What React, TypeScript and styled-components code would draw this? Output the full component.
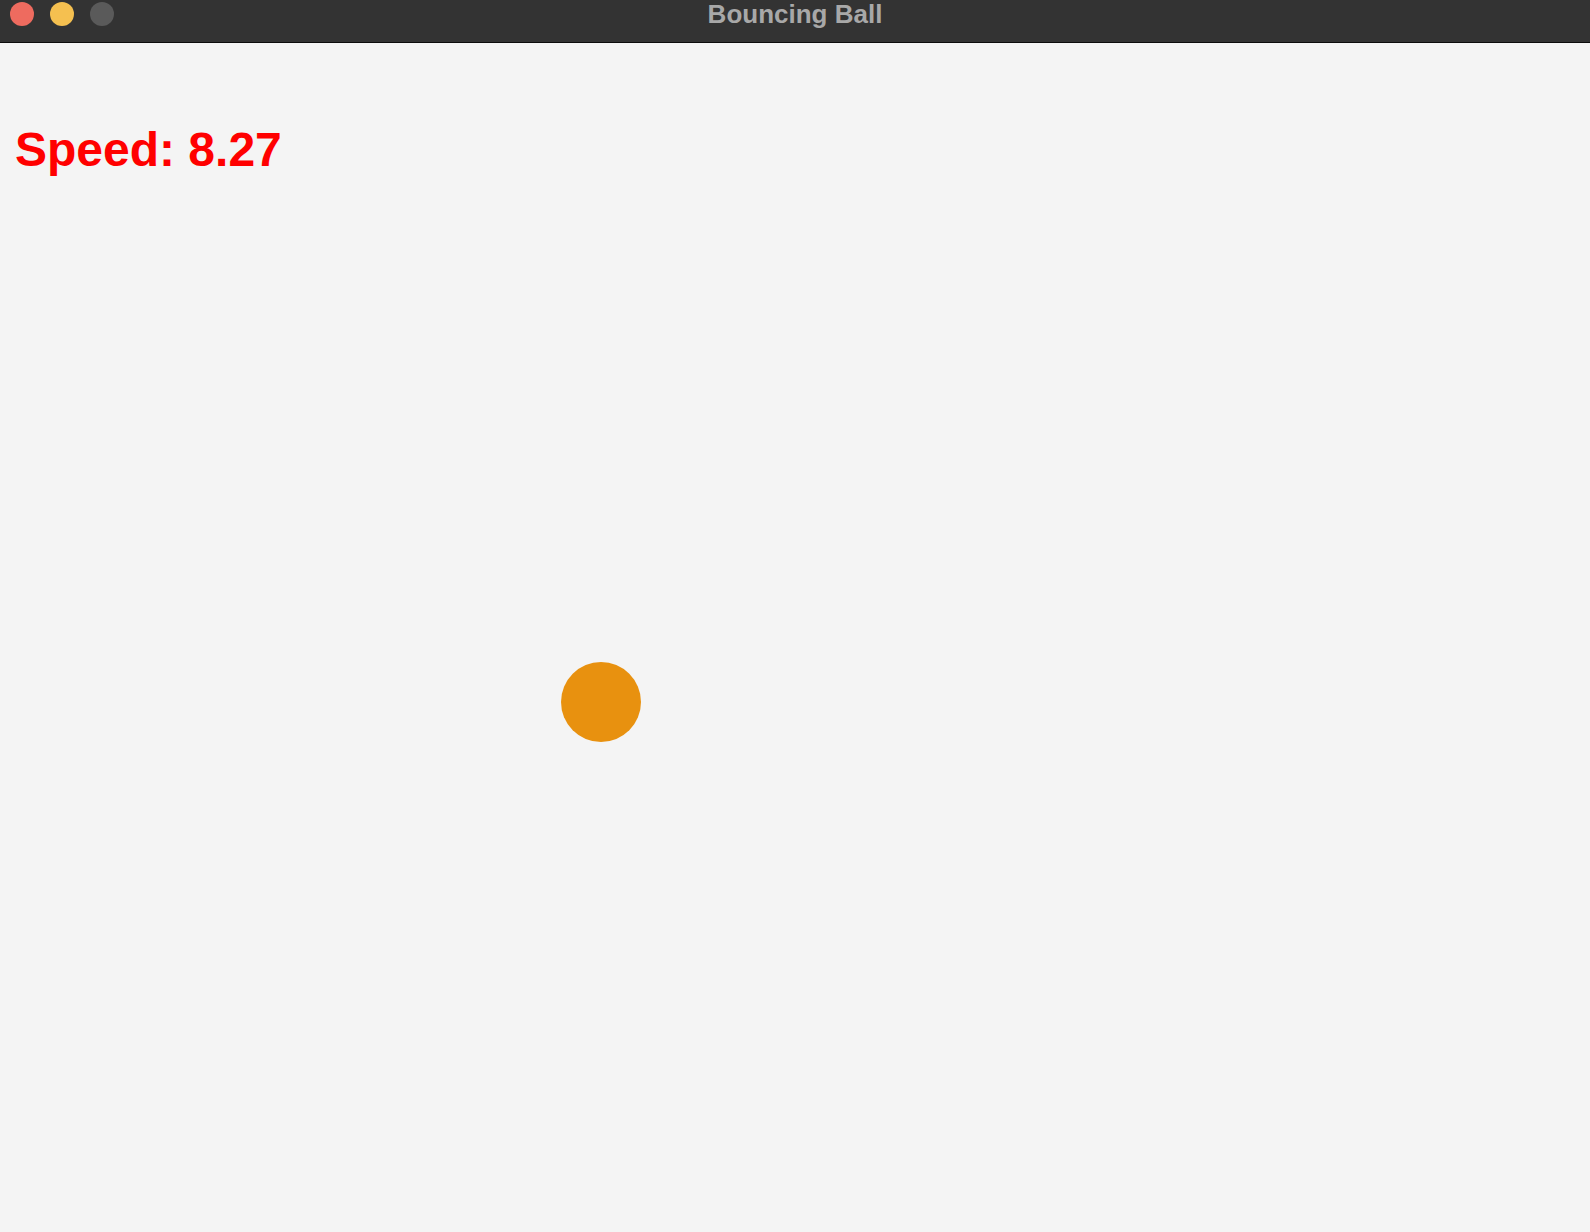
import * as React from 'react';
import styled, { createGlobalStyle } from 'styled-components';

const GlobalStyle = createGlobalStyle`
  html, body {
    margin: 0;
    padding: 0;
    background: #f4f4f4;
  }
  body {
    font-family: "Liberation Sans", Arial, sans-serif;
  }
`;

const Window = styled.div`
  width: 1590px;
  height: 1232px;
  display: flex;
  flex-direction: column;
  overflow: hidden;
`;

const TitleBar = styled.div`
  height: 42px;
  flex: none;
  background: #333333;
  border-bottom: 1px solid #0c0c0c;
  display: grid;
  grid-template-columns: 1fr auto 1fr;
  align-items: start;
`;

const Lights = styled.div`
  display: flex;
  gap: 16px;
  padding: 2px 0 0 10px;
`;

const Light = styled.span<{ color: string }>`
  width: 24px;
  height: 24px;
  border-radius: 50%;
  background: ${p => p.color};
`;

const Title = styled.div`
  font-family: "Liberation Sans", Arial, sans-serif;
  font-weight: bold;
  font-size: 26px;
  line-height: 1;
  padding-top: 1px;
  color: #a8a8a8;
`;

const Canvas = styled.div`
  position: relative;
  flex: 1;
  background: #f4f4f4;
  padding: 83px 0 0 15px;
`;

const Speed = styled.div`
  font-family: "Liberation Sans", Arial, sans-serif;
  font-weight: bold;
  font-size: 48px;
  line-height: 1;
  color: #ff0000;
`;

const Ball = styled.div<{ size: number }>`
  position: absolute;
  width: ${p => p.size}px;
  height: ${p => p.size}px;
  border-radius: 50%;
  background: #e8910f;
`;

export default function App() {
  const ball = { x: 561, y: 619, size: 80 };
  return (
    <Window>
      <GlobalStyle />
      <TitleBar>
        <Lights>
          <Light color="#ee6b5f" />
          <Light color="#f5c050" />
          <Light color="#5a5a5a" />
        </Lights>
        <Title>Bouncing Ball</Title>
        <div />
      </TitleBar>
      <Canvas>
        <Speed>Speed: 8.27</Speed>
        <Ball size={ball.size} style={{ left: ball.x, top: ball.y }} />
      </Canvas>
    </Window>
  );
}
